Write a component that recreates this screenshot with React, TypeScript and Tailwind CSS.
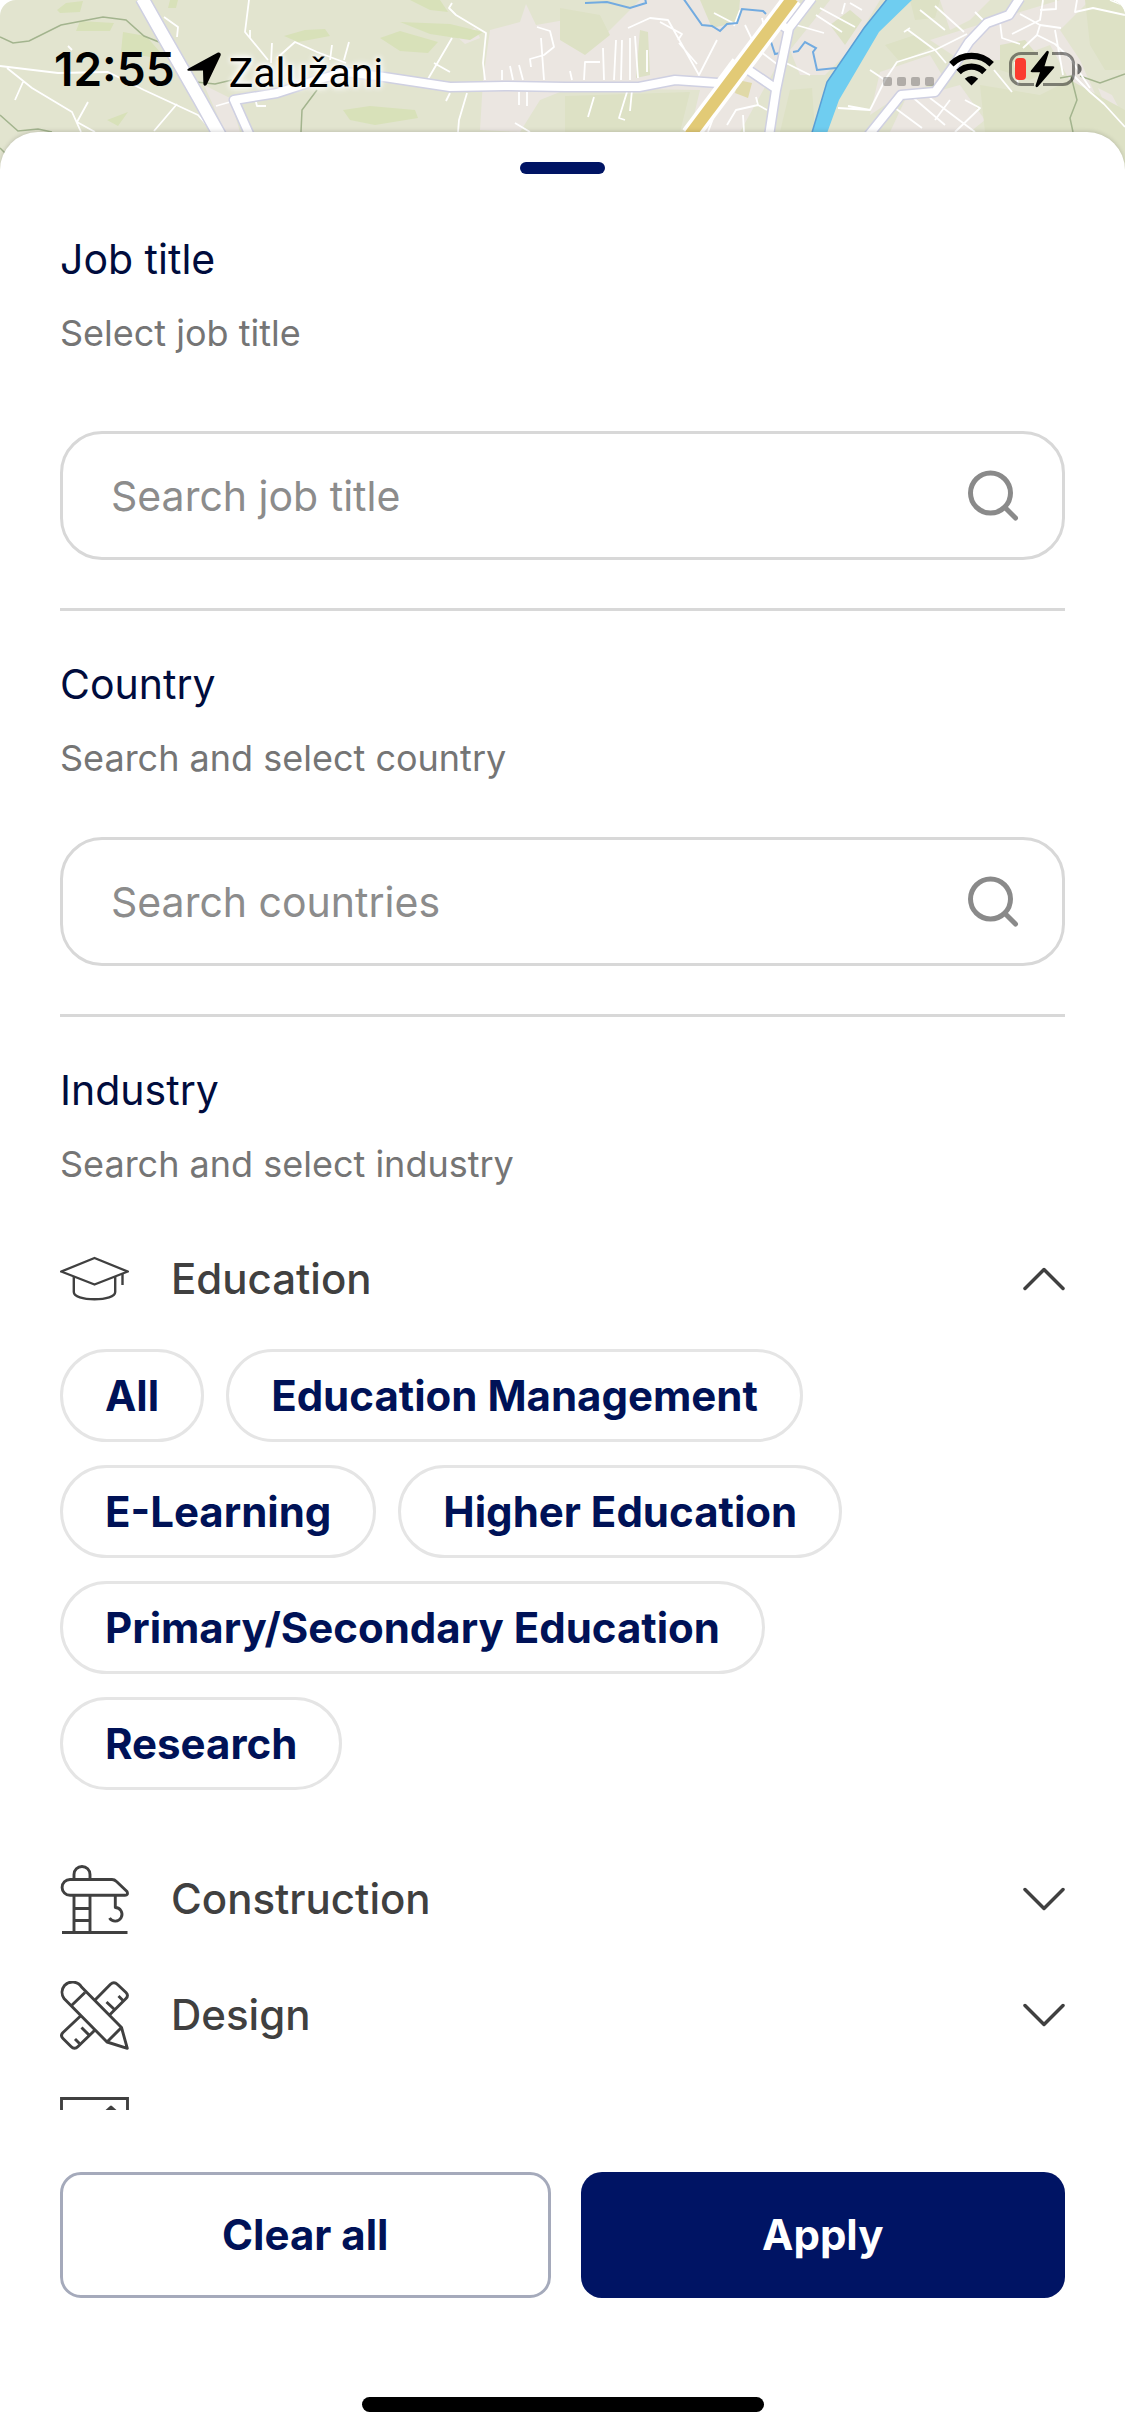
import { useState, type ReactNode } from "react";

const CHIPS = [
  "All",
  "Education Management",
  "E-Learning",
  "Higher Education",
  "Primary/Secondary Education",
  "Research",
];

// Thin local streets, drawn as plain white lines
const STREETS = [
  "M0 66L58 73L108 72L144 90L198 115L206 124",
  "M7 68L32 88L72 112L81 132M23 82L15 100M88 102L77 122L95 132M177 104L154 131",
  "M249 0L245 32L268 60M277 58L295 42L317 52L346 63M272 43L271 63M332 45L330 60M349 42L344 60M250 30L250 38",
  "M164 17L178 27L177 37M452 3L449 8L456 15L486 33L483 63L485 80M452 38L428 79M434 63L450 72",
  "M537 27L550 31L554 47L544 55L530 59L531 67M541 38L544 80M502 70L502 80M510 66L513 80M519 65L523 80M519 92L519 105M527 92L527 106",
  "M467 93L459 120L458 132M450 93L446 101M515 123L530 132M68 46L72 50M256 102L257 106L266 106M216 106L230 102",
  "M628 28L650 18L668 20L699 75L717 40M660 22L682 34L678 40M679 43L697 64M616 40L614 80M622 40L621 80M630 38L630 80M635 36L638 78M603 48L604 80M584 80L585 62L600 62M647 50L647 72M570 71L572 80",
  "M594 97L588 117M627 92L619 118L625 120M632 90L630 111M740 10L734 26M714 13L735 24M745 25L756 48L782 68M762 18L768 40",
  "M756 97L758 105L767 110M758 105L736 110L727 125M743 115L744 132M718 105L708 132M780 60L810 75M796 25L824 33M816 15L842 32M820 8L855 27M850 3L862 10M845 3L842 14",
  "M908 30L935 50L946 63M904 32L910 28M967 34L935 50L897 62L885 80L870 110L838 108M920 10L945 30M935 6L964 32M975 12L985 22M870 70L885 80M870 110L848 106",
  "M1000 22L1002 38L1020 44M1012 34L1040 20L1043 0M1020 14L1040 25L1061 28M1040 25L1037 35L1023 48M1056 0L1056 9L1040 10",
  "M1077 0L1075 12L1093 8L1125 15M1110 0L1125 6M1037 35L1055 44L1070 58L1090 88M1055 30L1063 75M994 70L1012 92M1015 62L1018 85",
  "M910 95L945 125M895 108L922 128M930 98L975 132M955 132L980 108L965 100M935 120L950 100",
  "M1073 75L1090 92L1104 104L1125 127",
];

const TRAILS = [
  "M0 37L13 43L29 41L61 25L103 17L126 20L144 36L159 42",
  "M0 115L18 131L38 129L52 132M0 148L8 156",
  "M317 90L302 110L301 132M196 82L215 84L232 80",
  "M1060 78L1071 76L1077 100L1070 118L1073 132M1080 76L1100 83L1125 74",
];

const ROADS = [
  "M142 -2L160 30L200 100L220 136",
  "M250 136L234 100L277 93L317 80L345 72L384 77L450 87L505 86L565 87L639 87L675 80L718 83",
  "M812 -2L789 28L776 90L769 136M777 22L789 30M747 69L775 88",
  "M1020 -2L1009 15L987 23L969 42L953 67L935 92L901 95L868 136",
];

const STREAMS = [
  "M585 3L607 2L630 8L646 3L645 -2",
  "M683 -2L702 25L712 26L720 31L727 24L737 23L742 9L763 11L766 14",
  "M771 42L775 54L780 53M793 52L798 51L805 42L816 48L813 52L817 70L836 68",
];

function MapBackdrop() {
  return (
    <svg
      aria-hidden="true"
      viewBox="0 0 1125 180"
      preserveAspectRatio="xMidYMin slice"
      className="absolute inset-x-0 top-0 h-[180px] w-full rounded-t-2xl bg-[#e2e4cf]"
      fill="none"
    >
      <g fill="#ebe6e1">
        <path d="M490 30L520 22L526 4L536 25L565 20L600 40L640 0L800 0L780 60L740 132L690 132L700 90L570 88L540 100L520 132L480 130L483 80Z" />
        <path d="M830 0L880 0L850 50L825 75L800 75L790 50Z M905 100L960 85L985 120L970 132L890 132Z" />
        <path d="M930 40L1010 15L1060 0L1090 0L1060 30L1080 60L1100 105L1075 90L1050 45L1010 60L960 60Z M940 0L990 0L970 20L950 30Z M204 85L230 98L240 132L225 132Z M880 72L930 55L945 80L900 95L870 115Z" />
        <path d="M455 35L475 28L480 38L465 44Z M1098 88L1112 95L1120 110L1105 105Z" />
      </g>
      <g fill="#d8e1b9">
        <path d="M123 32L146 36L160 52L150 57L121 52Z M57 10L66 3L83 1L80 12L60 13Z M80 21L114 23L110 31L76 31Z" />
        <path d="M284 36L305 30L325 29L330 36L298 42Z M380 38L400 31L438 42L428 53L400 51Z M400 22L450 24L483 32L470 40L430 34Z M410 0L440 0L448 12L430 10Z M170 0L178 0L176 8L168 8Z" />
        <path d="M343 110L370 106L415 110L418 118L375 125L350 120Z M107 120L128 112L118 126Z" />
      </g>
      <g fill="#dde1c5">
        <path d="M560 8L600 15L610 35L585 55L560 40Z M640 30L648 32L650 75L636 78Z M700 0L740 0L738 22L712 28Z M790 90L812 88L815 132L780 132Z M565 96L690 92L680 132L565 132Z" />
        <path d="M980 85L1040 95L1070 80L1125 110L1125 180L985 132Z M1000 45L1025 40L1050 70L1030 80L1000 70Z M1085 0L1125 0L1125 70L1105 70L1090 45Z M885 45L915 35L930 48L900 62Z" />
        <path d="M830 25L850 10L862 20L845 45Z M910 0L940 0L935 18L915 20Z" />
      </g>
      <path d="M738 80L752 83L748 98L735 93Z" fill="#e0d9a8" />

      <g stroke="#a3b48e" strokeWidth="1.5">
        {TRAILS.map((d) => (
          <path key={d} d={d} />
        ))}
      </g>
      <g stroke="#fff" strokeWidth="1.8" strokeLinejoin="round">
        {STREETS.map((d) => (
          <path key={d} d={d} />
        ))}
      </g>
      <g stroke="#72abe0" strokeWidth="2">
        {STREAMS.map((d) => (
          <path key={d} d={d} />
        ))}
      </g>
      <path
        d="M888 -2L864 28L827 82L811 136L826 136L839 100L879 32L914 -2Z"
        fill="#6fcdf0"
      />
      <path d="M888 -2L864 28L827 82L811 136" stroke="#5a9fd6" strokeWidth="1.5" />
      <g stroke="#cfd0e2" strokeWidth="11" strokeLinejoin="round">
        {ROADS.map((d) => (
          <path key={d} d={d} />
        ))}
        <path d={ROADS[0]} strokeWidth="15" />
      </g>
      <g stroke="#fff" strokeWidth="8" strokeLinejoin="round">
        {ROADS.map((d) => (
          <path key={d} d={d} />
        ))}
        <path d={ROADS[0]} strokeWidth="12" />
      </g>
      <path d="M735 60L718 83" stroke="#fff" strokeWidth="6" />
      <path d="M793 -2L690 135" stroke="#fff" strokeWidth="19" />
      <path d="M793 -2L690 135" stroke="#e2ca76" strokeWidth="12" />
    </svg>
  );
}

function StatusBar() {
  return (
    <div className="relative flex h-[132px] items-start justify-between pt-[42px] pr-[42px] pl-[54px] text-black">
      <div className="flex h-[54px] items-center">
        <span className="text-[46px] leading-[54px] font-semibold">12:55</span>
        <svg viewBox="0 0 34 34" className="ml-3 size-[34px]" aria-hidden="true">
          <path
            d="M1.5 16.5L30.5.8C32.6-.2 34.5 1.600 33.500 3.700L19.800 32.500C19 34.300 16.500 33.900 16.400 31.900L16 18.600L2.200 18.800C0 18.800-.4 17.500 1.500 16.500Z"
            fill="currentColor"
          />
        </svg>
        <span className="mt-2 ml-2 font-[Roboto] text-[41px] leading-[54px] [text-shadow:0_0_4px_#fff,0_0_6px_#fff,0_0_8px_#fff]">
          Zalužani
        </span>
      </div>
      <div className="flex h-[54px] items-center">
        <div className="mt-6 flex gap-[5px]">
          {[0, 1, 2, 3].map((i) => (
            <span key={i} className="size-[9px] rounded-xs bg-black/25" />
          ))}
        </div>
        <svg viewBox="0 0 45 34" className="ml-[15px] h-[34px] w-[45px]" aria-hidden="true">
          <g fill="none" stroke="currentColor" strokeWidth="6.200">
            <path d="M2.300 12.300A28.500 28.500 0 0 1 42.700 12.300" />
            <path d="M9.600 20A18 18 0 0 1 35.400 20" />
          </g>
          <path d="M22.500 33.500L15.800 26.700A9.500 9.500 0 0 1 29.200 26.700Z" fill="currentColor" />
        </svg>
        <svg viewBox="0 0 74 38" className="ml-[15px] h-[38px] w-[74px]" aria-hidden="true">
          <path
            d="M29 3.500H12A10.500 10.500 0 0 0 1.500 14V24A10.500 10.500 0 0 0 12 34.500H25M43 3.500H54A10.500 10.500 0 0 1 64.500 14V24A10.500 10.500 0 0 1 54 34.500H34"
            fill="none"
            stroke="#000"
            strokeOpacity=".45"
            strokeWidth="3"
          />
          <path d="M68.500 13.500C74 15 74 23 68.500 24.500Z" fill="#000" fillOpacity=".55" />
          <rect x="6" y="8" width="11" height="22" rx="4" fill="#fb3b30" />
          <path
            d="M37.500 1.200L22 20.500Q21 22.200 23 22.200H31L26.500 35.500Q26.500 38 28.800 36.800L45 18Q46 16.200 44 16.200H35.500L39.800 2.500Q39.800 0 37.500 1.200Z"
            fill="#000"
          />
        </svg>
      </div>
    </div>
  );
}

function SearchIcon() {
  return (
    <svg
      viewBox="0 0 52 52"
      className="size-[52px] shrink-0 text-[#8a8a8a]"
      fill="none"
      stroke="currentColor"
      strokeWidth="5"
      strokeLinecap="round"
      aria-hidden="true"
    >
      <circle cx="22.500" cy="23" r="20" />
      <path d="M37 37.500L47.500 48" />
    </svg>
  );
}

function Chevron({ open = false }: { open?: boolean }) {
  return (
    <svg
      viewBox="0 0 42 24"
      className={`h-6 w-[42px] shrink-0 ${open ? "" : "rotate-180"}`}
      fill="none"
      stroke="currentColor"
      strokeWidth="3.500"
      strokeLinecap="round"
      strokeLinejoin="round"
      aria-hidden="true"
    >
      <path d="M2 21.500L21 2.500L40 21.500" />
    </svg>
  );
}

function RowIcon({ children }: { children: ReactNode }) {
  return (
    <svg
      viewBox="0 0 69 69"
      className="size-[69px] shrink-0"
      fill="none"
      stroke="currentColor"
      strokeWidth="2.900"
      strokeLinejoin="round"
      aria-hidden="true"
    >
      {children}
    </svg>
  );
}

function EducationIcon() {
  return (
    <RowIcon>
      <g strokeWidth="2.400">
        <path d="M1.200 26.500L34.500 13L67.800 26.500L34.500 39.500Z" />
        <path d="M13.800 32V47C13.800 51.500 23 54.200 34.500 54.200S55.200 51.500 55.200 47V32M62.500 29V40" />
      </g>
    </RowIcon>
  );
}

function ConstructionIcon() {
  return (
    <RowIcon>
      <path d="M10 14.500H52Q54.500 14.500 56.500 16.500L67 26.500Q68.500 30.300 65 30.300H10A7.900 7.900 0 0 1 10 14.500Z" />
      <path d="M14 14.500V9.500A8 8 0 0 1 30 9.500V14.500M14 30.300V67M30 30.300V67M14 43.500H30M14 55.500H30" />
      <path d="M55.300 30.300V42.500A6.800 6.800 0 1 1 49.500 53" />
      <path d="M2 67.500H67.500" />
    </RowIcon>
  );
}

function DesignIcon() {
  return (
    <RowIcon>
      <path d="M4 17.500L47 61L67.300 67.300L61.500 46.500L21.500 6A10.800 10.800 0 0 0 4.500 4.500A10.800 10.800 0 0 0 4 17.500Z" />
      <path d="M11.500 24.500L25 11.500M61.500 46.500L47 61" />
      <path d="M35 19L50.500 3.200Q54 0 57.500 3.500L66 11.500Q69 14.500 66 17.500L49 34.500" />
      <path d="M46.500 21L54.500 28.500M58.500 15L63 19.500" />
      <path d="M20.500 35L3 51.500Q0 54.500 3 57.500L11 65.500Q14.500 69 18 65.500L34.500 49.500" />
      <path d="M21.500 46.500L29.500 54.500M15 58L19.500 62.500" />
    </RowIcon>
  );
}

function MediaIcon() {
  return (
    <RowIcon>
      <path d="M1.500 1.500H67.500V67.500H1.500Z" strokeLinejoin="miter" />
      <path d="M51 10L62 20H40Z" fill="currentColor" />
    </RowIcon>
  );
}

function Heading({ title, hint, htmlFor }: { title: string; hint: string; htmlFor?: string }) {
  return (
    <div className="flex flex-col gap-[27px]">
      <h2 className="text-[41px] leading-[50px] text-[#000c3d]">
        {htmlFor ? <label htmlFor={htmlFor}>{title}</label> : title}
      </h2>
      <p className="text-[36px] leading-[44px] text-[#757575]">{hint}</p>
    </div>
  );
}

function SearchField({ id, placeholder }: { id: string; placeholder: string }) {
  return (
    <div className="flex h-[129px] items-center rounded-[42px] border-3 border-[#d8d8d8] pr-[42px] pl-12">
      <input
        id={id}
        type="text"
        placeholder={placeholder}
        className="h-full min-w-0 flex-1 bg-transparent text-[41px] text-[#404040] outline-none placeholder:text-[#8c8c8c]"
      />
      <SearchIcon />
    </div>
  );
}

type RowProps = {
  icon: ReactNode;
  name?: string;
  label?: string;
  open?: boolean;
  onClick?: () => void;
};

function IndustryRow({ icon, name, label, open = false, onClick }: RowProps) {
  return (
    <button
      type="button"
      aria-label={label}
      aria-expanded={open}
      onClick={onClick}
      className="flex h-[72px] w-full items-center text-left text-[#404040]"
    >
      {icon}
      <span className="ml-[42px] flex-1 text-[42px] leading-[50px] font-medium">{name}</span>
      <Chevron open={open} />
    </button>
  );
}

export default function App() {
  const [open, setOpen] = useState(true);

  return (
    <div className="relative flex h-screen flex-col bg-white font-[Inter,sans-serif]">
      <MapBackdrop />
      <StatusBar />

      <main className="relative flex min-h-0 flex-1 flex-col rounded-t-[38px] bg-white shadow-[0_-1px_4px_rgba(0,0,0,0.15)]">
        <div className="mx-auto mt-[30px] h-3 w-[85px] shrink-0 rounded-full bg-[#001464]" />

        <div className="mt-[60px] min-h-0 flex-1 overflow-y-auto px-[60px] [scrollbar-width:none]">
          <section className="border-b-3 border-[#d8d8d8] pb-12">
            <Heading title="Job title" hint="Select job title" htmlFor="job" />
            <div className="mt-[76px]">
              <SearchField id="job" placeholder="Search job title" />
            </div>
          </section>

          <section className="border-b-3 border-[#d8d8d8] py-12">
            <Heading title="Country" hint="Search and select country" htmlFor="country" />
            <div className="mt-[57px]">
              <SearchField id="country" placeholder="Search countries" />
            </div>
          </section>

          <section className="pt-12">
            <Heading title="Industry" hint="Search and select industry" />
            <div className="mt-[57px]">
              <IndustryRow
                icon={<EducationIcon />}
                name="Education"
                open={open}
                onClick={() => setOpen((v) => !v)}
              />
              {open && (
                <div className="mt-[34px] flex flex-wrap gap-x-[22px] gap-y-[23px]">
                  {CHIPS.map((chip) => (
                    <button
                      key={chip}
                      type="button"
                      className="h-[93px] rounded-full border-3 border-[#e5e5e5] px-[42px] text-[42px] leading-[50px] font-bold text-[#001257]"
                    >
                      {chip}
                    </button>
                  ))}
                </div>
              )}
            </div>
            <div className="mt-[73px] flex flex-col gap-11">
              <IndustryRow icon={<ConstructionIcon />} name="Construction" />
              <IndustryRow icon={<DesignIcon />} name="Design" />
              <IndustryRow icon={<MediaIcon />} label="Media" />
            </div>
          </section>
        </div>

        <footer className="shrink-0 px-[60px] pt-[62px] pb-6">
          <div className="flex h-[126px] gap-[30px] text-[42px] leading-[50px] font-bold">
            <button
              type="button"
              className="flex-1 rounded-[21px] border-3 border-[#a5aabb] text-[#001257]"
            >
              Clear all
            </button>
            <button type="button" className="flex-1 rounded-[21px] bg-[#001464] text-white">
              Apply
            </button>
          </div>
          <div className="mx-auto mt-[99px] h-[15px] w-[402px] rounded-full bg-black" />
        </footer>
      </main>
    </div>
  );
}
